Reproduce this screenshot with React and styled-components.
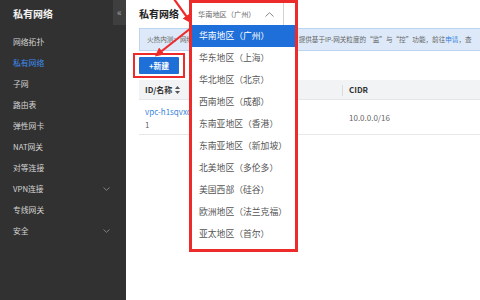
import React from "react";
import styled, { createGlobalStyle } from "styled-components";

const GlobalStyle = createGlobalStyle`
  html, body { margin: 0; padding: 0; width: 480px; height: 300px; overflow: hidden; background: #fff; }
  body { font-family: "Noto Sans CJK SC", "Noto Sans", sans-serif; }
  * { box-sizing: border-box; }
`;

const Page = styled.div`
  position: relative;
  display: flex;
  width: 480px;
  height: 300px;
  overflow: hidden;
`;

const Sidebar = styled.aside`
  width: 126px;
  flex: 0 0 126px;
  height: 300px;
  background: #313131;
  display: flex;
  flex-direction: column;
`;

const SideHeader = styled.div`
  height: 31px;
  display: flex;
  justify-content: space-between;
  align-items: flex-start;
`;

const SideTitle = styled.div`
  padding-left: 13px;
  height: 28px;
  line-height: 28px;
  font-size: 10px;
  font-weight: 700;
  color: #f2f2f2;
`;

const CollapseTab = styled.div`
  width: 13px;
  height: 25px;
  background: #3f3f3f;
  color: #a0a0a0;
  font-size: 10px;
  line-height: 23px;
  text-align: center;
`;

const Menu = styled.ul`
  list-style: none;
  margin: 0;
  padding: 0;
`;

const MenuItem = styled.li`
  height: 21px;
  display: flex;
  align-items: center;
  justify-content: space-between;
  padding: 0 16px 0 13px;
  font-size: 7.8px;
  color: ${(p) => (p.$active ? "#3d8cf0" : "#d4d4d4")};
`;

const Main = styled.main`
  flex: 1;
  position: relative;
  padding-left: 13px;
  display: flex;
  flex-direction: column;
  min-width: 0;
`;

const Title = styled.h1`
  margin: 0;
  height: 28px;
  line-height: 28px;
  font-size: 10px;
  font-weight: 700;
  color: #222;
`;

const Banner = styled.div`
  height: 23px;
  border: 1px solid #bcd5f2;
  border-right: none;
  background: #dde9f8;
  padding-left: 7px;
  line-height: 21px;
  font-size: 6.6px;
  color: #666;
  white-space: nowrap;
  overflow: hidden;
`;

const Link = styled.span`
  color: #2f7fe0;
`;

const Toolbar = styled.div`
  padding: 6px 0;
  display: flex;
`;

const Button = styled.button`
  position: relative;
  width: 40px;
  height: 17px;
  border: none;
  border-radius: 1px;
  background: #1f6fd8;
  color: #fff;
  font-family: inherit;
  font-size: 7.8px;
  font-weight: 700;
  padding: 0;
  &::after {
    content: "";
    position: absolute;
    top: -4px;
    bottom: -4px;
    left: -6px;
    right: -6px;
    border: 2.5px solid #ee2b2b;
  }
`;

const Table = styled.div`
  display: flex;
  flex-direction: column;
`;

const HeadRow = styled.div`
  display: flex;
  height: 20px;
  background: #f2f3f5;
  border-bottom: 1px solid #e4e6ea;
`;

const HeadCell = styled.div`
  position: relative;
  width: ${(p) => p.$w || "auto"};
  flex: ${(p) => (p.$w ? "none" : "1")};
  display: flex;
  align-items: center;
  padding-left: 6px;
  font-size: 8px;
  font-weight: 700;
  color: #333;
  ${(p) =>
    p.$divider &&
    `&::after { content: ""; position: absolute; right: 0; top: 5px; bottom: 3px; width: 1px; background: #dcdcdc; }`}
`;

const Row = styled.div`
  display: flex;
  height: 35px;
  border-bottom: 1px solid #e8e8e8;
`;

const Cell = styled.div`
  width: ${(p) => p.$w || "auto"};
  flex: ${(p) => (p.$w ? "none" : "1")};
  padding-left: 6px;
  padding-top: ${(p) => p.$pt || "0px"};
  font-size: 8px;
  line-height: 13px;
  color: #666;
  white-space: nowrap;
  overflow: hidden;
`;

const IdLink = styled.div`
  color: #3a84dc;
`;

const Dropdown = styled.div`
  position: absolute;
  left: 189px;
  top: 0;
  width: 109px;
  height: 252px;
  border: 3px solid #ee2b2b;
  background: #fff;
  display: flex;
  flex-direction: column;
`;

const Select = styled.div`
  width: 92px;
  height: 22px;
  border-right: 1px solid #d2d2d2;
  display: flex;
  align-items: center;
  justify-content: space-between;
  padding: 0 9px 0 6px;
  font-size: 7.2px;
  color: #666;
`;

const Options = styled.ul`
  list-style: none;
  margin: 0;
  padding: 0;
`;

const Option = styled.li`
  height: 22px;
  line-height: 22px;
  padding-left: 7px;
  font-size: 8.8px;
  white-space: nowrap;
  background: ${(p) => (p.$selected ? "#1e6fd9" : "transparent")};
  color: ${(p) => (p.$selected ? "#fff" : "#555")};
`;

const Overlay = styled.svg`
  position: absolute;
  left: 0;
  top: 0;
  pointer-events: none;
`;

const ChevronDown = () => (
  <svg width="7" height="4" viewBox="0 0 7 4">
    <polyline points="0.5,0.5 3.5,3.3 6.5,0.5" fill="none" stroke="#8a8a8a" strokeWidth="0.9" />
  </svg>
);

const ChevronUp = () => (
  <svg width="9" height="5" viewBox="0 0 9 5">
    <polyline points="0.5,4.5 4.5,0.7 8.5,4.5" fill="none" stroke="#777" strokeWidth="0.9" />
  </svg>
);

const SortIcon = () => (
  <svg width="5" height="8" viewBox="0 0 5 8" style={{ marginLeft: 3 }}>
    <polygon points="2.5,0 5,3 0,3" fill="#555" />
    <polygon points="0,5 5,5 2.5,8" fill="#555" />
  </svg>
);

const menu = [
  { t: "网络拓扑" },
  { t: "私有网络", active: true },
  { t: "子网" },
  { t: "路由表" },
  { t: "弹性网卡" },
  { t: "NAT网关" },
  { t: "对等连接" },
  { t: "VPN连接", chevron: true },
  { t: "专线网关" },
  { t: "安全", chevron: true },
];

const regions = [
  "华南地区（广州）",
  "华东地区（上海）",
  "华北地区（北京）",
  "西南地区（成都）",
  "东南亚地区（香港）",
  "东南亚地区（新加坡）",
  "北美地区（多伦多）",
  "美国西部（硅谷）",
  "欧洲地区（法兰克福）",
  "亚太地区（首尔）",
];

export default function App() {
  return (
    <Page>
      <GlobalStyle />
      <Sidebar>
        <SideHeader>
          <SideTitle>私有网络</SideTitle>
          <CollapseTab>«</CollapseTab>
        </SideHeader>
        <Menu>
          {menu.map((m) => (
            <MenuItem key={m.t} $active={m.active}>
              <span>{m.t}</span>
              {m.chevron && <ChevronDown />}
            </MenuItem>
          ))}
        </Menu>
      </Sidebar>
      <Main>
        <Title>私有网络</Title>
        <Banner>
          火热内测：网络流量分析与控制功能现已开放内测，提供基于IP-网关粒度的“监”与“控”功能，前往<Link>申请</Link>，查
        </Banner>
        <Toolbar>
          <Button>+新建</Button>
        </Toolbar>
        <Table>
          <HeadRow>
            <HeadCell $w="204px" $divider>
              ID/名称
              <SortIcon />
            </HeadCell>
            <HeadCell>CIDR</HeadCell>
          </HeadRow>
          <Row>
            <Cell $w="204px" $pt="5px">
              <IdLink>vpc-h1sqvxqt</IdLink>
              <div>1</div>
            </Cell>
            <Cell $pt="11px">10.0.0.0/16</Cell>
          </Row>
        </Table>
      </Main>
      <Dropdown>
        <Select>
          <span>华南地区（广州）</span>
          <ChevronUp />
        </Select>
        <Options>
          {regions.map((r, i) => (
            <Option key={r} $selected={i === 0}>
              {r}
            </Option>
          ))}
        </Options>
      </Dropdown>
      <Overlay width="480" height="300" viewBox="0 0 480 300">
        <defs>
          <marker id="head" markerWidth="4" markerHeight="4" refX="2.2" refY="2" orient="auto" markerUnits="strokeWidth">
            <polygon points="0,0 4,2 0,4" fill="#ee2b2b" />
          </marker>
        </defs>
        <line x1="174" y1="-1" x2="189" y2="20" stroke="#ee2b2b" strokeWidth="2.2" markerEnd="url(#head)" />
        <line x1="191" y1="28" x2="158" y2="54" stroke="#ee2b2b" strokeWidth="2.2" markerEnd="url(#head)" />
      </Overlay>
    </Page>
  );
}
